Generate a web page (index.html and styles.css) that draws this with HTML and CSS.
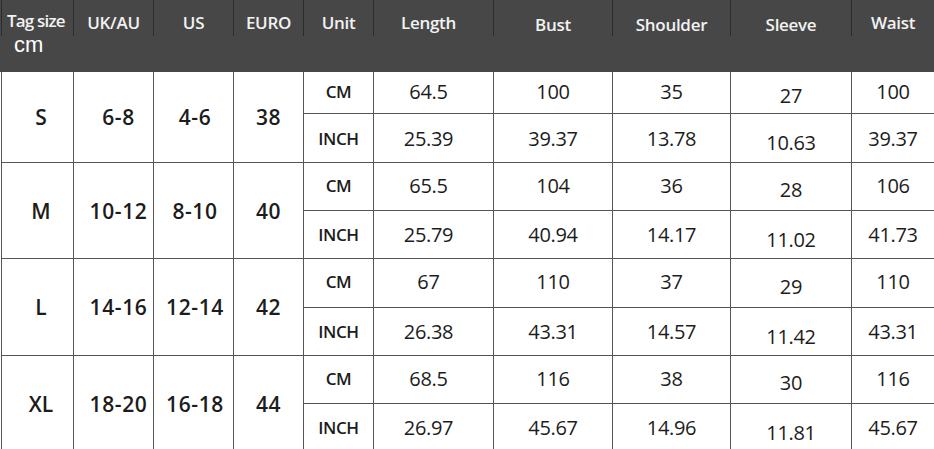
FILE: index.html
```html
<!DOCTYPE html>
<html>
<head>
<meta charset="utf-8">
<link rel="stylesheet" href="styles.css">
</head>
<body>
<div class="chart">
  <div class="head">
    <div class="head-row">
      <div class="hc tag">Tag size</div>
      <div class="hc">UK/AU</div>
      <div class="hc">US</div>
      <div class="hc">EURO</div>
      <div class="hc">Unit</div>
      <div class="hc len">Length</div>
      <div class="hc low">Bust</div>
      <div class="hc low">Shoulder</div>
      <div class="hc low">Sleeve</div>
      <div class="hc last">Waist</div>
    </div>
    <div class="cm">cm</div>
  </div>
  <div class="grid">
    <div class="c span size">S</div><div class="c span range">6-8</div><div class="c span range us">4-6</div><div class="c span euro">38</div>
    <div class="c unit up">CM</div><div class="c num len up">64.5</div><div class="c num up">100</div><div class="c num up">35</div><div class="c num slv up">27</div><div class="c num up last">100</div>
    <div class="c unit">INCH</div><div class="c num len">25.39</div><div class="c num">39.37</div><div class="c num">13.78</div><div class="c num slv">10.63</div><div class="c num last">39.37</div>

    <div class="c span size">M</div><div class="c span range">10-12</div><div class="c span range us">8-10</div><div class="c span euro">40</div>
    <div class="c unit up">CM</div><div class="c num len up">65.5</div><div class="c num up">104</div><div class="c num up">36</div><div class="c num slv up">28</div><div class="c num up last">106</div>
    <div class="c unit">INCH</div><div class="c num len">25.79</div><div class="c num">40.94</div><div class="c num">14.17</div><div class="c num slv">11.02</div><div class="c num last">41.73</div>

    <div class="c span size">L</div><div class="c span range">14-16</div><div class="c span range us">12-14</div><div class="c span euro">42</div>
    <div class="c unit up">CM</div><div class="c num len up">67</div><div class="c num up">110</div><div class="c num up">37</div><div class="c num slv up">29</div><div class="c num up last">110</div>
    <div class="c unit">INCH</div><div class="c num len">26.38</div><div class="c num">43.31</div><div class="c num">14.57</div><div class="c num slv">11.42</div><div class="c num last">43.31</div>

    <div class="c span size">XL</div><div class="c span range">18-20</div><div class="c span range us">16-18</div><div class="c span euro">44</div>
    <div class="c unit up">CM</div><div class="c num len up">68.5</div><div class="c num up">116</div><div class="c num up">38</div><div class="c num slv up">30</div><div class="c num up last">116</div>
    <div class="c unit">INCH</div><div class="c num len">26.97</div><div class="c num">45.67</div><div class="c num">14.96</div><div class="c num slv">11.81</div><div class="c num last">45.67</div>
  </div>
</div>
</body>
</html>
```
FILE: styles.css
```css
* { box-sizing: border-box; }
html, body { margin: 0; padding: 0; background: #fff; }
body { font-family: "Open Sans", "DejaVu Sans", sans-serif; overflow: hidden; }

.chart { width: 934px; }

.head { background: #474747; height: 72px; }
.head-row {
  display: grid;
  grid-template-columns: 72px 80px 80px 70px 70px 120px 119px 118px 121px 1fr;
  height: 36px;
  margin-left: 1px;
  border-left: 1px solid #2c2c2c;
}
.hc {
  display: flex;
  align-items: center;
  justify-content: center;
  padding-top: 8px;
  border-right: 1px solid #2c2c2c;
  color: #f2f2f2;
  font-weight: 600;
  font-size: 17px;
  letter-spacing: -0.3px;
  white-space: nowrap;
}
.hc.last { border-right: none; }
.hc.tag { padding-top: 4px; letter-spacing: -0.8px; justify-content: flex-start; padding-left: 5px; }
.hc.len { padding-right: 10px; }
.hc.low { padding-top: 13px; }

.cm {
  padding-left: 14px;
  color: #fff;
  font-family: "Liberation Sans", Arial, sans-serif;
  font-size: 22px;
  line-height: 18px;
}

.grid {
  display: grid;
  grid-template-columns: 72px 80px 80px 70px 70px 120px 119px 118px 121px 1fr;
  grid-template-rows: 42px 49px 48px 48px 49px 48px 48px 48px;
  margin-left: 1px;
  border-left: 1px solid #555;
}
.c {
  display: flex;
  align-items: center;
  justify-content: center;
  border-right: 1px solid #555;
  border-bottom: 1px solid #555;
  color: #1c1c1c;
  white-space: nowrap;
}
.c.last { border-right: none; }
.span { grid-row: span 2; }

.size { font-weight: 600; font-size: 21px; padding-left: 7px; }
.range { font-weight: 600; font-size: 21px; letter-spacing: 0.6px; padding-left: 10px; }
.range.us { padding-left: 3px; }
.euro { font-weight: 600; font-size: 21px; letter-spacing: 0.5px; }

.unit { font-weight: 600; font-size: 17px; letter-spacing: -0.4px; }
.num { font-size: 20px; font-weight: 400; letter-spacing: -0.3px; }
.num.len { padding-right: 10px; }
.num.slv { padding-top: 9px; }
.up { padding-bottom: 3px; }
.num.slv.up { padding-top: 6px; padding-bottom: 0; }
```
